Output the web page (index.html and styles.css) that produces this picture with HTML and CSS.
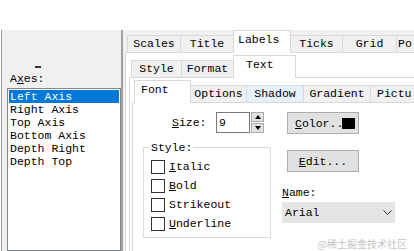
FILE: index.html
```html
<!DOCTYPE html>
<html lang="en">
<head>
  <meta charset="UTF-8" />
  <title>Axis Labels</title>
  <meta name="viewport" content="width=device-width, initial-scale=1.0" />
  <link rel="stylesheet" href="styles.css">
</head>
<body>
  <div class="dialog">
    <div class="axes-pane">
      <div class="dash"></div>
      <div class="axes-label">A<u>x</u>es:</div>
      <ul class="listbox">
        <li class="selected">Left Axis</li>
        <li>Right Axis</li>
        <li>Top Axis</li>
        <li>Bottom Axis</li>
        <li>Depth Right</li>
        <li>Depth Top</li>
      </ul>
    </div>

    <div class="splitter"></div>

    <div class="tabctl outer">
      <div class="tabrow">
        <div class="tab t-scales">Scales</div>
        <div class="tab t-title">Title</div>
        <div class="tab active t-labels">Labels</div>
        <div class="tab t-ticks">Ticks</div>
        <div class="tab t-grid">Grid</div>
        <div class="tab t-po">Po</div>
      </div>
      <div class="page">
        <div class="tabctl inner">
          <div class="tabrow">
            <div class="tab t-style">Style</div>
            <div class="tab t-format">Format</div>
            <div class="tab active t-text">Text</div>
          </div>
          <div class="page">
            <div class="tabctl third">
              <div class="tabrow">
                <div class="tab active t-font">Font</div>
                <div class="tab t-options">Options</div>
                <div class="tab hot t-shadow">Shadow</div>
                <div class="tab t-gradient">Gradient</div>
                <div class="tab t-picture">Pictu</div>
              </div>
              <div class="page font-page">
                <div class="col-left">
                  <div class="size-row">
                    <span class="size-label"><u>S</u>ize:</span>
                    <div class="edit">9</div>
                    <div class="spin">
                      <span class="up"></span>
                      <span class="down"></span>
                    </div>
                  </div>
                  <fieldset class="groupbox">
                    <legend>Style:</legend>
                    <div class="check"><span class="box"></span><u>I</u>talic</div>
                    <div class="check"><span class="box"></span><u>B</u>old</div>
                    <div class="check"><span class="box"></span>Strikeout</div>
                    <div class="check"><span class="box"></span><u>U</u>nderline</div>
                  </fieldset>
                </div>
                <div class="col-right">
                  <button class="btn color-btn"><u>C</u>olor..<span class="swatch"></span></button>
                  <button class="btn edit-btn"><u>E</u>dit...</button>
                  <div class="name-label"><u>N</u>ame:</div>
                  <div class="combo">
                    <span>Arial</span>
                    <svg width="9" height="6" viewBox="0 0 9 6"><polyline points="0.5,0.5 4.5,4.5 8.5,0.5" fill="none" stroke="#333" stroke-width="1"/></svg>
                  </div>
                </div>
              </div>
            </div>
          </div>
        </div>
      </div>
    </div>
  </div>

  <div class="watermark">@稀土掘金技术社区</div>
</body>
</html>
```

FILE: styles.css
```css
body {
  margin: 0;
  width: 414px;
  height: 251px;
  overflow: hidden;
  position: relative;
  background: #fff;
  color: #000;
  font-family: "Liberation Mono", "DejaVu Sans Mono", monospace;
  font-size: 11.5px;
  line-height: 13px;
}

u {
  text-decoration: underline;
  text-underline-offset: 1px;
}

.dialog {
  display: flex;
  margin: 30px 0 0 1px;
  height: 221px;
  border-left: 1px solid #a0a0a0;
  background: #f0f0f0;
  overflow: hidden;
}

/* left: axis list */
.axes-pane {
  width: 119px;
  flex-shrink: 0;
  display: flex;
  flex-direction: column;
  padding: 36px 0 0 5px;
  box-sizing: border-box;
}

.dash {
  width: 6px;
  height: 2px;
  background: #333;
  margin-left: 28px;
}

.axes-label {
  margin-top: 4px;
  padding-left: 3px;
}

.listbox {
  list-style: none;
  margin: 3px 0 0;
  padding: 1px;
  width: 114px;
  box-sizing: border-box;
  border: 1px solid #828790;
  background: #fff;
  flex: 1;
}

.listbox li {
  height: 13px;
  padding-left: 1px;
  white-space: nowrap;
}

.listbox li.selected {
  background: #0078d7;
  color: #fff;
}

.splitter {
  width: 3px;
  flex-shrink: 0;
  border-left: 2px solid #a0a0a0;
  box-sizing: border-box;
}

/* tab controls */
.tabctl {
  display: flex;
  flex-direction: column;
  flex: 1;
  min-width: 0;
}

.outer {
  margin-left: 1px;
}

.tabrow {
  display: flex;
  align-items: flex-end;
  height: 22px;
  padding-left: 2px;
  flex-shrink: 0;
}

.tab {
  box-sizing: border-box;
  height: 17px;
  margin-left: -1px;
  border: 1px solid #d9d9d9;
  border-bottom: 0;
  background: #f0f0f0;
  text-align: center;
  line-height: 15px;
  white-space: nowrap;
  overflow: hidden;
  flex-shrink: 0;
}

.tab:first-child {
  margin-left: 0;
}

.tab.active {
  height: 23px;
  margin-bottom: -1px;
  background: #fff;
  line-height: 18px;
  position: relative;
  z-index: 1;
}

.tab.hot {
  background: #e5f1fb;
  border-color: #c9def3;
}

.page {
  flex: 1;
  display: flex;
  min-height: 0;
  border: 1px solid #d9d9d9;
  border-right: 0;
  border-bottom: 0;
  background: #fff;
}

.outer > .page {
  padding: 2px 0 0 3px;
}

.inner > .page {
  padding: 2px 0 0 2px;
}

.t-scales { width: 54px; }
.t-title { width: 54px; }
.t-labels { width: 58px; text-align: left; padding-left: 4px; }
.t-ticks { width: 53px; }
.t-grid { width: 55px; }
.t-po { width: 70px; text-align: left; padding-left: 1px; }

.t-style { width: 51px; }
.t-format { width: 53px; }
.t-text { width: 63px; text-align: left; padding-left: 12px; }

.t-font { width: 57px; text-align: left; padding-left: 6px; }
.t-options { width: 57px; }
.t-shadow { width: 58px; }
.t-gradient { width: 68px; }
.t-picture { width: 70px; text-align: left; padding-left: 6px; }

/* font page */
.font-page {
  padding: 9px 0 0 10px;
}

.col-left {
  width: 128px;
  flex-shrink: 0;
  display: flex;
  flex-direction: column;
}

.size-row {
  display: flex;
  align-items: center;
  height: 21px;
  margin-left: 29px;
}

.size-label {
  width: 44px;
}

.edit {
  width: 34px;
  height: 21px;
  box-sizing: border-box;
  border: 1px solid #7a7a7a;
  padding-left: 2px;
  line-height: 19px;
}

.spin {
  width: 13px;
  height: 21px;
  margin-left: 1px;
  display: flex;
  flex-direction: column;
  gap: 1px;
}

.spin span {
  flex: 1;
  display: flex;
  align-items: center;
  justify-content: center;
  border: 1px solid #adadad;
  background: #e1e1e1;
}

.spin .up::after,
.spin .down::after {
  content: "";
  border-left: 3px solid transparent;
  border-right: 3px solid transparent;
}

.spin .up::after {
  border-bottom: 4px solid #000;
}

.spin .down::after {
  border-top: 4px solid #000;
}

.groupbox {
  margin: 8px 0 0;
  padding: 3px 0 4px 7px;
  width: 128px;
  min-width: 0;
  box-sizing: border-box;
  border: 1px solid #dcdcdc;
}

.groupbox legend {
  padding: 0 1px;
  margin-left: -1px;
  line-height: 13px;
}

.check {
  display: flex;
  align-items: center;
  height: 19px;
}

.box {
  width: 14px;
  height: 14px;
  box-sizing: border-box;
  border: 1px solid #333;
  background: #fff;
  margin-right: 4px;
}

.col-right {
  margin-left: 11px;
  display: flex;
  flex-direction: column;
  align-items: flex-start;
}

.btn {
  width: 72px;
  height: 22px;
  margin: 0 0 0 5px;
  padding: 0;
  border: 1px solid #adadad;
  background: #e1e1e1;
  color: #000;
  font: inherit;
  display: flex;
  align-items: center;
  justify-content: center;
}

.color-btn {
  justify-content: flex-start;
  padding-left: 7px;
}

.swatch {
  width: 13px;
  height: 11px;
  background: #000;
  margin-left: -1px;
}

.edit-btn {
  margin-top: 16px;
}

.name-label {
  margin-top: 14px;
}

.combo {
  margin-top: 3px;
  width: 113px;
  height: 21px;
  box-sizing: border-box;
  padding: 0 3px 0 3px;
  background: #e5e5e5;
  display: flex;
  align-items: center;
  justify-content: space-between;
}

.watermark {
  position: absolute;
  right: 7px;
  bottom: 1px;
  font-family: "Noto Sans CJK SC", sans-serif;
  font-size: 10px;
  line-height: 12px;
  color: #c4c4c4;
}
```
